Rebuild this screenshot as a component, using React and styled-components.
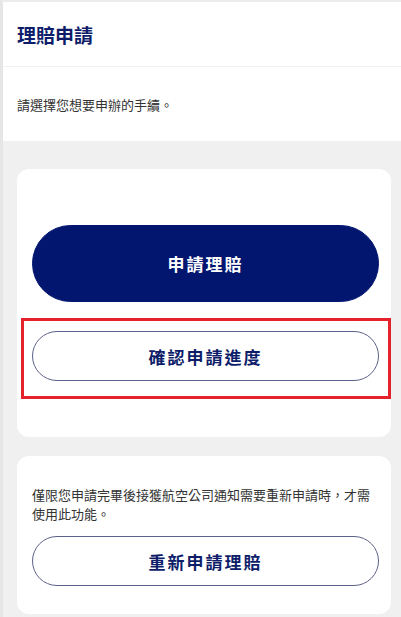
import React from "react";
import styled, { createGlobalStyle } from "styled-components";

const GlobalStyle = createGlobalStyle`
  html, body {
    margin: 0;
    padding: 0;
    background: #f0f0f0;
  }
  body {
    font-family: "Noto Sans CJK TC", "Noto Sans", sans-serif;
  }
`;

const Page = styled.div`
  width: 401px;
  height: 617px;
  box-sizing: border-box;
  border-top: 2px solid #ececec;
  border-left: 3px solid #e6e6e6;
  background: #f0f0f0;
  overflow: hidden;
`;

const Header = styled.header`
  height: 64px;
  padding-left: 14px;
  display: flex;
  align-items: center;
  background: #fff;
  border-bottom: 1px solid #f0f0f0;
`;

const Title = styled.h1`
  margin: 0;
  font-size: 19px;
  font-weight: 700;
  color: #0e1d6a;
`;

const Intro = styled.div`
  height: 74px;
  padding-left: 14px;
  display: flex;
  align-items: center;
  background: #fff;
`;

const IntroText = styled.p`
  margin: 0;
  font-size: 13px;
  color: #333;
`;

const Content = styled.main`
  padding: 28px 10px 0 14px;
  display: flex;
  flex-direction: column;
  gap: 19px;
`;

const Card = styled.section`
  background: #fff;
  border-radius: 12px;
  padding: ${(p) => p.$padding};
  display: flex;
  flex-direction: column;
  gap: ${(p) => p.$gap};
`;

const Note = styled.p`
  margin: 0;
  font-size: 13px;
  line-height: 19px;
  color: #333;
`;

const Button = styled.button`
  width: 100%;
  height: ${(p) => (p.$primary ? "77px" : "50px")};
  border-radius: 40px;
  border: 1px solid ${(p) => (p.$primary ? "#021670" : "#5d6088")};
  background: ${(p) => (p.$primary ? "#021670" : "#fff")};
  color: ${(p) => (p.$primary ? "#fff" : "#0e1d6a")};
  font-family: inherit;
  font-size: 17px;
  font-weight: 700;
  letter-spacing: 2px;
  cursor: pointer;
`;

const Highlight = styled.div`
  position: relative;
`;

const HighlightFrame = styled.span`
  position: absolute;
  top: -13px;
  left: -11px;
  right: -12px;
  bottom: -18px;
  border: 3px solid #e4222b;
  pointer-events: none;
`;

export default function App() {
  return (
    <>
      <GlobalStyle />
      <Page>
        <Header>
          <Title>理賠申請</Title>
        </Header>
        <Intro>
          <IntroText>請選擇您想要申辦的手續。</IntroText>
        </Intro>
        <Content>
          <Card $padding="56px 12px 56px 15px" $gap="29px">
            <Button $primary>申請理賠</Button>
            <Highlight>
              <Button>確認申請進度</Button>
              <HighlightFrame />
            </Highlight>
          </Card>
          <Card $padding="29px 12px 28px 15px" $gap="13px">
            <Note>
              僅限您申請完畢後接獲航空公司通知需要重新申請時，才需使用此功能。
            </Note>
            <Button>重新申請理賠</Button>
          </Card>
        </Content>
      </Page>
    </>
  );
}
